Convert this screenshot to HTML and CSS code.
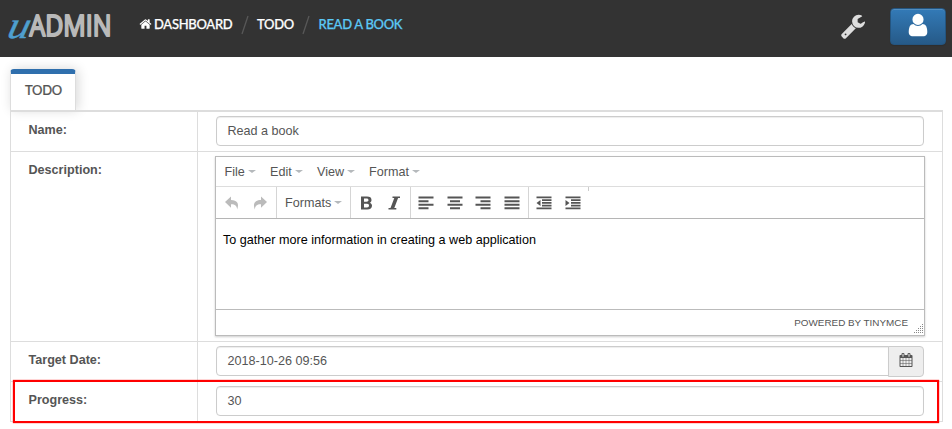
FILE: index.html
```html
<!DOCTYPE html>
<html lang="en">
<head>
<meta charset="utf-8">
<title>uAdmin - Read a book</title>
<link rel="stylesheet" href="styles.css">
</head>
<body>
<header class="topbar">
  <svg class="logo" width="108" height="48" viewBox="0 0 108 48">
    <text class="logo-u" x="0" y="0" transform="translate(-1 32.500) skewX(-14)" textLength="22" lengthAdjust="spacingAndGlyphs">u</text>
    <text class="logo-name" x="22.500" y="31" textLength="82" lengthAdjust="spacingAndGlyphs">ADMIN</text>
  </svg>
  <nav class="crumbs">
    <svg class="home" viewBox="0 0 1792 1792"><path d="M1472 992v480q0 26-19 45t-45 19h-384v-384h-256v384h-384q-26 0-45-19t-19-45v-480q0-1 .5-3t.5-3l575-474 575 474q1 2 1 6zm223-69l-62 74q-8 9-21 11h-3q-13 0-21-7l-692-577-692 577q-12 8-24 7-13-2-21-11l-62-74q-8-10-7-23.5t11-21.5l719-599q32-26 76-26t76 26l244 204v-195q0-14 9-23t23-9h192q14 0 23 9t9 23v408l219 182q10 8 11 21.5t-7 23.5z"/></svg>
    <span class="crumb dash">DASHBOARD</span>
    <svg class="slash" viewBox="0 0 8 20"><path d="M1 19 7 1"/></svg>
    <span class="crumb todo">TODO</span>
    <svg class="slash" viewBox="0 0 8 20"><path d="M1 19 7 1"/></svg>
    <span class="crumb current">READ A BOOK</span>
  </nav>
  <svg class="wrench" viewBox="0 0 1792 1792"><path d="M448 1472q0-26-19-45t-45-19-45 19-19 45 19 45 45 19 45-19 19-45zm644-420l-682 682q-37 37-90 37-52 0-91-37l-106-108q-38-36-38-90 0-53 38-91l681-681q39 98 114.500 173.500t173.500 114.500zm634-435q0 39-23 106-47 134-164.500 217.500t-258.500 83.500q-185 0-316.500-131.500t-131.500-316.500 131.500-316.500 316.500-131.500q58 0 121.500 16.500t107.500 46.500q16 11 16 28t-16 28l-293 169v224l193 107q5-3 79-48.500t135.500-81 70.500-35.500q15 0 23.500 10t8.500 25z"/></svg>
  <div class="user"><svg viewBox="0 0 1792 1792"><path d="M1536 1399q0 109-62.500 187t-150.500 78h-854q-88 0-150.500-78t-62.500-187q0-85 8.500-160.500t31.500-152 58.500-131 94-89 134.500-34.500q131 128 313 128t313-128q76 0 134.500 34.500t94 89 58.500 131 31.500 152 8.500 160.500zm-256-887q0 159-112.500 271.500t-271.500 112.500-271.500-112.500-112.500-271.500 112.500-271.500 271.500-112.500 271.500 112.500 112.500 271.500z"/></svg></div>
</header>
<main>
  <div class="tab">TODO</div>
  <div class="form">
    <div class="row"><div class="label">Name:</div><div class="cell"><div class="input">Read a book</div></div></div>
    <div class="row"><div class="label">Description:</div><div class="cell">
      <div class="editor">
        <div class="menubar">
          <span class="m1">File<i></i></span><span class="m2">Edit<i></i></span><span class="m3">View<i></i></span><span class="m4">Format<i></i></span>
        </div>
        <div class="toolbar">
          <div class="group history">
            <svg viewBox="0 0 16 16"><path d="M7 1.500v3.500c6 0 8.500 3.500 6.200 9.500C13 10.500 10.500 9 7 9.200v3.500L1 7z"/></svg>
            <svg viewBox="0 0 16 16"><path d="M9 1.500v3.500C3 5 .5 8.500 2.800 14.500 3 10.500 5.500 9 9 9.200v3.500L15 7z"/></svg>
          </div>
          <div class="group formats">Formats<i></i></div>
          <div class="group styles">
            <svg viewBox="0 0 16 16"><path fill-rule="evenodd" d="M3 1.500h6c3 0 4.500 1.200 4.500 3.400 0 1.400-.7 2.400-1.800 2.800 1.500.4 2.300 1.600 2.300 3.100 0 2.400-1.700 3.700-4.700 3.700H3zm3 2v3.200h2.500c1.300 0 2-.6 2-1.600S9.800 3.500 8.500 3.500zm0 5.200v3.800h3c1.300 0 2-.7 2-1.900S10.300 8.700 9 8.700z"/></svg>
            <svg viewBox="0 0 16 16"><path d="M6.500 1.500H14v1.400h-1.900L8.300 13h2v1.500H2.500V13h2l3.800-10.100H6.500z"/></svg>
          </div>
          <div class="group aligns">
            <svg viewBox="0 0 16 16"><path d="M.5 1.500h15v2H.500zM.5 5.200h10v2H.500zM.5 8.800h15v2H.500zM.5 12.300h10v2H.500z"/></svg>
            <svg viewBox="0 0 16 16"><path d="M.5 1.500h15v2H.500zM3 5.200h10v2H3zM.5 8.800h15v2H.500zM3 12.300h10v2H3z"/></svg>
            <svg viewBox="0 0 16 16"><path d="M.5 1.500h15v2H.500zM5.500 5.200h10v2h-10zM.5 8.800h15v2H.500zM5.500 12.300h10v2h-10z"/></svg>
            <svg viewBox="0 0 16 16"><path d="M.5 1.500h15v2H.500zM.5 5.200h15v2H.500zM.5 8.800h15v2H.500zM.5 12.300h15v2H.500z"/></svg>
          </div>
          <div class="group last">
            <svg viewBox="0 0 16 16"><path d="M.5 1.500h15v1.700H.500zM6 4.200h9.500v1.700H6zM6 7h9.500v1.700H6zM6 9.800h9.500v1.700H6zM.5 12.600h15v1.700H.500zM4.500 5v6L.5 8z"/></svg>
            <svg viewBox="0 0 16 16"><path d="M.5 1.500h15v1.700H.500zM6 4.200h9.500v1.700H6zM6 7h9.500v1.700H6zM6 9.800h9.500v1.700H6zM.5 12.600h15v1.700H.500zM.5 5v6l4-3z"/></svg>
          </div>
          <div class="tick"></div>
        </div>
        <div class="content">To gather more information in creating a web application</div>
        <div class="status"><span>POWERED BY TINYMCE</span>
          <svg viewBox="0 0 10 10"><path d="M8 0h1v1H8zM6 2h1v1H6zM8 2h1v1H8zM4 4h1v1H4zM6 4h1v1H6zM8 4h1v1H8zM2 6h1v1H2zM4 6h1v1H4zM6 6h1v1H6zM8 6h1v1H8zM0 8h1v1H0zM2 8h1v1H2zM4 8h1v1H4zM6 8h1v1H6zM8 8h1v1H8z"/></svg>
        </div>
      </div>
    </div></div>
    <div class="row"><div class="label">Target Date:</div><div class="cell date"><div class="input">2018-10-26 09:56</div><div class="addon"><svg viewBox="0 0 1792 1792"><path d="M192 1664h288v-288h-288v288zm352 0h320v-288h-320v288zm-352-352h288v-320h-288v320zm352 0h320v-320h-320v320zm-352-384h288v-288h-288v288zm736 736h320v-288h-320v288zm-384-736h320v-288h-320v288zm768 736h288v-288h-288v288zm-384-352h320v-320h-320v320zm-352-864v-288q0-13-9.500-22.500t-22.500-9.500h-64q-13 0-22.500 9.500t-9.500 22.500v288q0 13 9.500 22.500t22.500 9.500h64q13 0 22.500-9.500t9.500-22.500zm736 864h288v-320h-288v320zm-384-384h320v-288h-320v288zm384 0h288v-288h-288v288zm32-480v-288q0-13-9.500-22.500t-22.500-9.500h-64q-13 0-22.500 9.500t-9.500 22.500v288q0 13 9.500 22.500t22.500 9.500h64q13 0 22.500-9.500t9.500-22.500zm384-64v1280q0 52-38 90t-90 38h-1408q-52 0-90-38t-38-90v-1280q0-52 38-90t90-38h128v-96q0-66 47-113t113-47h64q66 0 113 47t47 113v96h384v-96q0-66 47-113t113-47h64q66 0 113 47t47 113v96h128q52 0 90 38t38 90z"/></svg></div></div></div>
    <div class="row marked"><div class="label">Progress:</div><div class="cell"><div class="input">30</div></div></div>
  </div>
</main>
</body>
</html>
```
FILE: styles.css
```css
* { box-sizing: border-box; }
body {
  margin: 0;
  height: 429px;
  overflow: hidden;
  background: #fff;
  color: #555;
  font: 12.6px/18px "Liberation Sans", Arial, sans-serif;
}
svg { display: block; flex: none; fill: currentColor; }

.topbar {
  display: flex;
  align-items: flex-start;
  height: 57px;
  padding: 8px 6px 0 7px;
  background: #333;
  color: #fff;
}
.logo { margin-top: -3px; overflow: visible; }
.logo text { stroke-linejoin: round; }
.logo-u { font: italic 38px "Liberation Serif", serif; fill: #4e9fcf; stroke: #4e9fcf; stroke-width: .4; }
.logo-name { font: 28.5px "Open Sans", sans-serif; fill: #b9b9b9; stroke: #b9b9b9; stroke-width: 2; }

.crumbs {
  display: flex;
  align-items: center;
  height: 20px;
  margin: 6px auto 0 25px;
  font: 500 13px/20px Lato, sans-serif;
  letter-spacing: -.3px;
  -webkit-text-stroke: .25px currentColor;
  white-space: nowrap;
}
.home { width: 13px; height: 14px; margin: 0 2px 0 -1px; }
.dash { width: 78px; }
.todo { width: 37px; }
.current { color: #5bc8f5; }
.slash { width: 8px; height: 20px; margin: 2px 8px 0 9px; fill: none; stroke: #585858; stroke-width: 1.3; }
.todo + .slash { margin: 2px 8.5px 0 8px; }
.wrench { width: 26px; height: 26px; margin: 5px 24px 0 0; color: #ddd; }
.user {
  display: flex;
  align-items: center;
  justify-content: center;
  width: 56px;
  height: 37px;
  border: 1px solid #245580;
  border-radius: 4px;
  background: linear-gradient(#337ab7, #265a88);
  box-shadow: inset 0 1px 0 rgba(255,255,255,.15), 0 1px 1px rgba(0,0,0,.1);
}
.user svg { width: 26px; height: 26px; margin-bottom: 4px; }

main { padding: 12px 9px 0 10px; }
.tab {
  width: 66px;
  height: 41px;
  padding: 7px 0 0 14px;
  border: 1px solid #ddd;
  border-top: 5px solid #2f6fad;
  border-bottom: 0;
  border-radius: 4px 4px 0 0;
  box-shadow: 2px 0 12px rgba(0,0,0,.16);
  font: 500 13px/18px Lato, sans-serif;
  letter-spacing: -.3px;
  -webkit-text-stroke: .2px currentColor;
  color: #555;
}
.form { position: relative; border: 1px solid #ddd; border-top-width: 2px; border-bottom: 0; }
.row { display: grid; grid-template-columns: 187px 1fr; border-bottom: 1px solid #ddd; }
.label { padding: 9px 17.5px 7px; border-right: 1px solid #ddd; font-weight: bold; line-height: 19px; }
.cell { padding: 4px 18px 5px; }
.input {
  flex: 1;
  height: 30px;
  padding: 5px 10px 5px 10.5px;
  border: 1px solid #ccc;
  border-radius: 4px;
  box-shadow: inset 0 1px 1px rgba(0,0,0,.075);
}
.date { display: flex; }
.date .input { border-radius: 4px 0 0 4px; }
.addon {
  display: flex;
  justify-content: center;
  width: 36px;
  height: 31px;
  margin: 0 0 -1px -1px;
  padding-top: 6px;
  border: 1px solid #ccc;
  border-radius: 0 4px 4px 0;
  background: #eee;
}
.addon svg { width: 14px; height: 14px; }
.marked { position: relative; }
.marked::after {
  content: "";
  position: absolute;
  inset: -2px 3px -2px 2px;
  border: 2px solid #f00;
  box-shadow: 0 0 1px #f00;
}

.editor {
  width: 710px;
  height: 180px;
  margin-left: -1px;
  border: 1px solid #bbb;
  box-shadow: 0 1px 2px rgba(0,0,0,.2);
}
i {
  display: inline-block;
  margin-left: 3px;
  border: 4px solid transparent;
  border-top: 3px solid #b5b9bc;
  border-bottom: 0;
  vertical-align: 3px;
}
.menubar { display: flex; height: 30px; padding: 6px 0 0 8.5px; border-bottom: 1px solid #ddd; }
.m1 { width: 45.5px; }
.m2 { width: 47px; }
.m3 { width: 52px; }
.toolbar { display: flex; height: 32px; border-bottom: 1px solid #b5b5b5; }
.group { display: flex; gap: 13px; padding: 8px 7px 0; border-right: 1px solid #d5d5d5; }
.group svg { width: 16px; height: 16px; }
.history { gap: 12px; padding: 8px 8px 0; color: #bbb; }
.formats { display: block; width: 74px; padding: 7px 0 0 8px; }
.styles { width: 60px; gap: 12px; }
.aligns { width: 118px; gap: 12.7px; }
.last { border: 0; }
.tick { width: 1px; height: 4px; background: #ccc; }
.content { height: 91px; padding: 12px 7px; border-bottom: 1px solid #bbb; color: #000; }
.status { display: flex; justify-content: flex-end; height: 25px; padding: 4px 0 0 0; font-size: 9.9px; }
.status svg { width: 10px; height: 10px; margin: 10px 0 0 6px; color: #888; }
```
